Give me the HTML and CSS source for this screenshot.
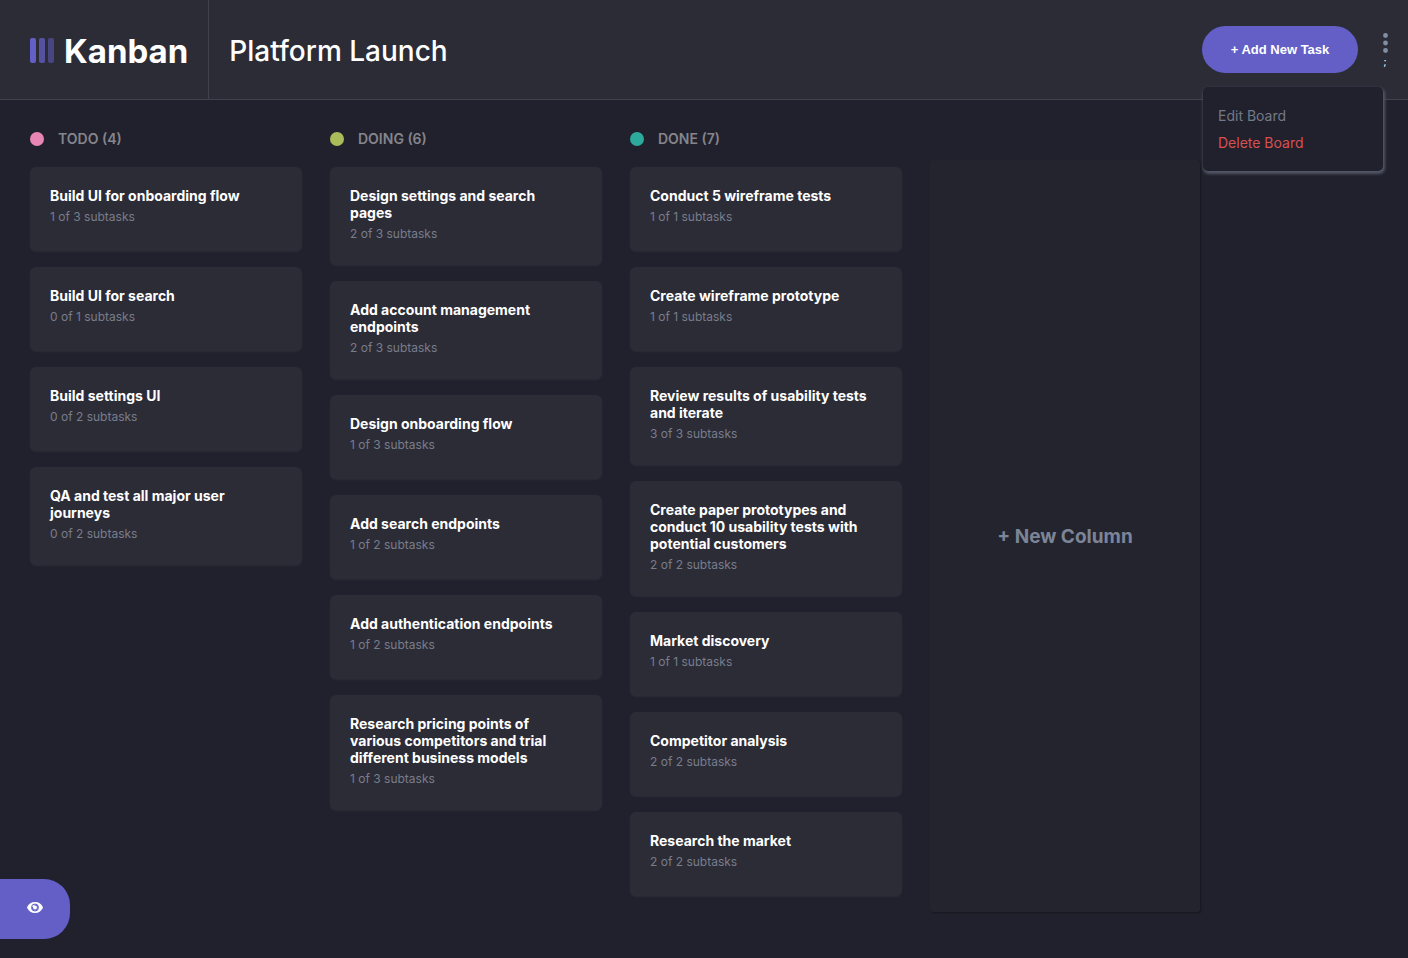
FILE: index.html
```html
<!DOCTYPE html>
<html lang="en">
<head>
<meta charset="utf-8">
<meta name="viewport" content="width=device-width, initial-scale=1">
<title>Kanban</title>
<link rel="stylesheet" href="styles.css">
</head>
<body>
<header class="topbar">
  <div class="brand">
    <svg class="brand-mark" width="24" height="25" viewBox="0 0 24 25" aria-hidden="true">
      <rect width="6" height="25" rx="2" fill="#635fc7"/>
      <rect x="9" width="6" height="25" rx="2" fill="#635fc7" opacity=".75"/>
      <rect x="18" width="6" height="25" rx="2" fill="#635fc7" opacity=".5"/>
    </svg>
    <span class="brand-name">Kanban</span>
  </div>
  <h1 class="board-title">Platform Launch</h1>
  <div class="actions">
    <button class="add-task" type="button">+ Add New Task</button>
    <button class="more" type="button" aria-label="Board options" aria-expanded="true">
      <svg width="5" height="20" viewBox="0 0 5 20" fill="#828fa3" aria-hidden="true">
        <circle cx="2.5" cy="2.5" r="2.4"/><circle cx="2.5" cy="10" r="2.4"/><circle cx="2.5" cy="17.5" r="2.4"/>
      </svg>
      <span>;</span>
    </button>
    <div class="menu">
      <button class="menu-item" type="button">Edit Board</button>
      <button class="menu-item danger" type="button">Delete Board</button>
    </div>
  </div>
</header>
<main class="board">
  <section class="column">
    <h2 class="column-title"><span class="dot todo"></span>TODO (4)</h2>
    <article class="card"><h3>Build UI for onboarding flow</h3><p>1 of 3 subtasks</p></article>
    <article class="card"><h3>Build UI for search</h3><p>0 of 1 subtasks</p></article>
    <article class="card"><h3>Build settings UI</h3><p>0 of 2 subtasks</p></article>
    <article class="card"><h3>QA and test all major user journeys</h3><p>0 of 2 subtasks</p></article>
  </section>
  <section class="column">
    <h2 class="column-title"><span class="dot doing"></span>DOING (6)</h2>
    <article class="card"><h3>Design settings and search pages</h3><p>2 of 3 subtasks</p></article>
    <article class="card"><h3>Add account management endpoints</h3><p>2 of 3 subtasks</p></article>
    <article class="card"><h3>Design onboarding flow</h3><p>1 of 3 subtasks</p></article>
    <article class="card"><h3>Add search endpoints</h3><p>1 of 2 subtasks</p></article>
    <article class="card"><h3>Add authentication endpoints</h3><p>1 of 2 subtasks</p></article>
    <article class="card"><h3>Research pricing points of various competitors and trial different business models</h3><p>1 of 3 subtasks</p></article>
  </section>
  <section class="column">
    <h2 class="column-title"><span class="dot done"></span>DONE (7)</h2>
    <article class="card"><h3>Conduct 5 wireframe tests</h3><p>1 of 1 subtasks</p></article>
    <article class="card"><h3>Create wireframe prototype</h3><p>1 of 1 subtasks</p></article>
    <article class="card"><h3>Review results of usability tests and iterate</h3><p>3 of 3 subtasks</p></article>
    <article class="card"><h3>Create paper prototypes and conduct 10 usability tests with potential customers</h3><p>2 of 2 subtasks</p></article>
    <article class="card"><h3>Market discovery</h3><p>1 of 1 subtasks</p></article>
    <article class="card"><h3>Competitor analysis</h3><p>2 of 2 subtasks</p></article>
    <article class="card"><h3>Research the market</h3><p>2 of 2 subtasks</p></article>
  </section>
  <button class="new-column" type="button">+ New Column</button>
</main>
<button class="show-sidebar" type="button" aria-label="Show sidebar">
  <svg width="16" height="11" viewBox="0 0 16 11" aria-hidden="true">
    <path fill="#fff" d="M15.8 5A8.9 8.9 0 0 0 8 0 8.9 8.9 0 0 0 .2 5a1 1 0 0 0 0 1A8.9 8.9 0 0 0 8 11a8.9 8.9 0 0 0 7.8-5 1 1 0 0 0 0-1Z"/>
    <circle cx="8" cy="5.5" r="3.5" fill="none" stroke="#635fc7" stroke-width="1"/>
    <path fill="#635fc7" d="M8 2.5a3 3 0 1 1-2.9 2.2 1.5 1.5 0 0 0 2.1-2.1Z"/>
    <circle cx="8" cy="5.5" r="2" fill="#fff"/>
  </svg>
</button>
</body>
</html>
```
FILE: styles.css
```css
* { box-sizing: border-box; }

body {
  margin: 0;
  min-height: 100vh;
  background: #21212d;
  color: #fff;
  font-family: Inter, "Liberation Sans", sans-serif;
}

h1, h2, h3, p { margin: 0; }

button {
  border: 0;
  padding: 0;
  background: none;
  color: inherit;
  font: inherit;
  cursor: pointer;
}

.topbar {
  display: flex;
  height: 100px;
  background: #2c2c37;
  border-bottom: 1px solid #41414e;
}

.brand {
  display: flex;
  align-items: center;
  gap: 10px;
  padding: 2px 20px 0 30px;
  border-right: 1px solid #41414e;
}

.brand-name {
  font-size: 33px;
  font-weight: 700;
  line-height: 40px;
}

.board-title {
  flex: 1;
  align-self: center;
  padding: 2px 0 0 20px;
  font-size: 28px;
  font-weight: 500;
  line-height: 36px;
}

.actions {
  position: relative;
  display: flex;
  align-items: center;
  gap: 24px;
  padding-right: 20px;
}

.add-task {
  width: 156px;
  height: 47px;
  border-radius: 24px;
  background: #635fc7;
  font-family: "Liberation Sans", Arial, sans-serif;
  font-size: 13px;
  font-weight: 700;
}

.more {
  display: flex;
  flex-direction: column;
  align-items: center;
  width: 6px;
  padding-top: 2px;
  font-size: 10px;
  line-height: 16px;
}

.menu {
  position: absolute;
  top: 87px;
  right: 25px;
  display: flex;
  flex-direction: column;
  align-items: flex-start;
  gap: 10px;
  width: 180px;
  padding: 20px;
  padding-left: 15px;
  border-radius: 5px;
  background: #21212d;
  box-shadow: 1px 2px 3px 1px #535767;
  font-size: 14px;
  line-height: 17px;
}

.menu-item { color: #747987; }
.danger { color: #d8504f; }

.board {
  display: flex;
  gap: 28px;
  padding: 30px 30px 46px;
}

.column {
  display: flex;
  flex: 0 0 272px;
  flex-direction: column;
  gap: 16px;
  padding-bottom: 16px;
}

.column-title {
  display: flex;
  align-items: center;
  gap: 14px;
  margin-bottom: 3px;
  color: #85858c;
  font-size: 14px;
  font-weight: 600;
  line-height: 18px;
}

.dot {
  width: 14px;
  height: 14px;
  border-radius: 50%;
}

.todo { background: #e785b4; }
.doing { background: #aabb5a; }
.done { background: #2caa9b; }

.card {
  min-height: 84px;
  padding: 20px 28px 24px 20px;
  border-radius: 6px;
  background: #2c2c37;
  box-shadow: 0 1px 2px #2c2c37;
}

.card h3 {
  font-size: 14px;
  font-weight: 700;
  line-height: 17px;
}

.card p {
  margin-top: 5px;
  color: #787d8b;
  font-size: 12px;
  line-height: 15px;
}

.new-column {
  flex: 0 0 270px;
  margin-top: 30px;
  border-radius: 3px;
  background: #24242e;
  box-shadow: 1px 1px 2px #171720;
  color: #7c8597;
  font-size: 19px;
  font-weight: 700;
}

.show-sidebar {
  position: fixed;
  bottom: 19px;
  left: 0;
  display: flex;
  align-items: center;
  justify-content: center;
  width: 70px;
  height: 60px;
  padding-bottom: 3px;
  border-radius: 0 26px 26px 0;
  background: #635fc7;
}
```
